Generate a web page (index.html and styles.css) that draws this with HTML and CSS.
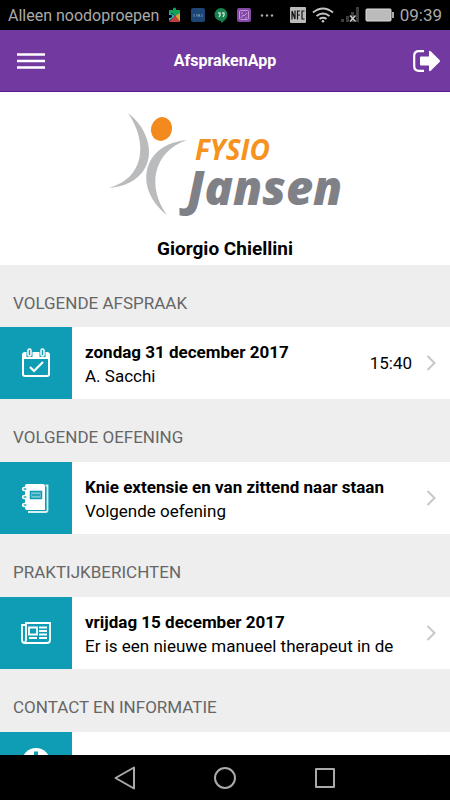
FILE: index.html
```html
<!DOCTYPE html>
<html lang="nl">
<head>
<meta charset="utf-8">
<meta name="viewport" content="width=device-width, initial-scale=1">
<title>AfsprakenApp</title>
<link rel="stylesheet" href="styles.css">
</head>
<body>
<div class="status">
  <span class="carrier">Alleen noodoproepen</span>
  <div class="notices">
    <svg width="14" height="16" viewBox="0 0 14 16"><path d="M1 3h4V2a1 1 0 0 1 3 0v1h4v4l-5 2-3-3H1z" fill="#12a35a"/><path d="M1 5l6 4-6 5v-3q3 0 3-2T1 8z" fill="#2bb5cf"/><path d="M12 6v9L7 9z" fill="#d9a52c"/><path d="M7 8.500l5 6.500H1z" fill="#c23d43"/></svg>
    <svg width="14" height="14" viewBox="0 0 14 14"><rect width="14" height="14" rx="2" fill="#1d4677"/><path d="M3 6v3M5 8h1V6M7 9l1-3 1 3M11 6v3" fill="none" stroke="#7897b8" stroke-width=".8"/></svg>
    <svg width="14" height="15" viewBox="0 0 14 15"><path d="M7 0a6.500 6.500 0 0 1 6.500 6.500C13.500 10 11 13 7 15v-2A6.500 6.500 0 0 1 7 0z" fill="#16834f"/><path d="M4 5h2v2L5 9M8 5h2v2L9 9" fill="none" stroke="#c6d8ce" stroke-width="1.500"/></svg>
    <svg width="14" height="14" viewBox="0 0 14 14"><rect width="14" height="14" rx="2" fill="#8547a8"/><rect x="2.500" y="2.500" width="9" height="9" rx="1" fill="none" stroke="#c09bd2"/><path d="M4 10l2-3 1 1 3-3M4 5h2M8 10h2" fill="none" stroke="#c09bd2"/></svg>
    <svg width="14" height="14" viewBox="0 0 14 14" fill="#aaa"><circle cx="2" cy="7.500" r="1.200"/><circle cx="7" cy="7.500" r="1.200"/><circle cx="12" cy="7.500" r="1.200"/></svg>
  </div>
  <div class="signals">
    <svg width="16" height="16" viewBox="0 0 16 16"><rect width="16" height="16" rx="1" fill="#bbb"/><path d="M2 12.500V4l3 8V3.500M7.500 12.500V4H10M7.500 8H10M14.500 4H12v8h2.500" fill="none" stroke="#111" stroke-width="1.200"/></svg>
    <svg width="22" height="16" viewBox="0 0 22 16" fill="none" stroke="#c4c4c4" stroke-width="2"><path d="M1 5.500q10-8 20 0M4.500 9q6.500-5 13 0M7.500 12q3.500-2.500 7 0"/><circle cx="11" cy="14.300" r="1.300" fill="#c4c4c4" stroke="none"/></svg>
    <svg width="19" height="16" viewBox="0 0 19 16"><path d="M1 12h3v3H1zM6 9h3v6H6zM11 5h3v10h-3zM16 0h3v15h-3z" fill="#3d3d3d"/><path d="M10 8.500l5.500 6M15.500 8.500l-5.500 6" stroke="#ccc" stroke-width="1.500"/></svg>
    <svg width="29" height="14" viewBox="0 0 29 14"><rect x="1" y="1" width="25" height="12" rx="1" fill="#bbb" stroke="#ddd"/><path d="M27 4h2v6h-2z" fill="#aaa"/></svg>
    <span class="clock">09:39</span>
  </div>
</div>
<header class="bar">
  <button class="menu" aria-label="Menu"><svg width="28" height="18" viewBox="0 0 28 18"><path d="M0 2.500h28M0 9h28M0 15.500h28" stroke="#fff" stroke-width="2.600"/></svg></button>
  <h1>AfsprakenApp</h1>
  <button class="logout" aria-label="Uitloggen"><svg width="27" height="22" viewBox="0 0 27 22"><path d="M11 1.200H6Q1.200 1.200 1.200 6v10q0 4.800 4.800 4.800h5" fill="none" stroke="#fff" stroke-width="2.200"/><path d="M8 6.500h8V2q0-2 2-.5l8.500 8.500q1 1 0 2L18 20.500q-2 1.500-2-.5v-4.500H8q-1 0-1-1v-7q0-1 1-1z" fill="#fff"/></svg></button>
</header>
<main>
  <div class="profile">
    <svg class="logo" width="240" height="112" viewBox="0 0 240 112" role="img" aria-label="Fysio Jansen">
      <path d="M23 5C55 30 52 76 4 80C40 70 43 34 23 5z" fill="#b9bbbd"/>
      <path d="M82 32C37 36 28 80 62 107C42 80 47 44 82 32z" fill="#b9bbbd"/>
      <ellipse cx="56.500" cy="21" rx="10.500" ry="12" transform="rotate(15 56.500 21)" fill="#f28a1d"/>
      <text class="logo-top" x="90" y="52">FYSIO</text>
      <text class="logo-name" x="82" y="97">Jansen</text>
    </svg>
    <p class="name">Giorgio Chiellini</p>
  </div>
  <section>
    <h2>VOLGENDE AFSPRAAK</h2>
    <a class="item" href="#afspraak">
      <span class="tile"><svg width="28" height="30" viewBox="0 0 28 30"><path d="M3 4h22q3 0 3 3v19q0 3-3 3H3q-3 0-3-3V7q0-3 3-3z" fill="#fff"/><path d="M2 11h24v15q0 1-1 1H3q-1 0-1-1z" fill="#0e9db4"/><path d="M4.500 3h6v6h-6zM17.500 3h6v6h-6z" fill="#0e9db4"/><rect x="6" y="1" width="3" height="7" rx="1.500" fill="none" stroke="#fff" stroke-width="1.500"/><rect x="19" y="1" width="3" height="7" rx="1.500" fill="none" stroke="#fff" stroke-width="1.500"/><path d="M8 19l4 4 9-9" fill="none" stroke="#fff" stroke-width="2.200"/></svg></span>
      <span class="text"><strong>zondag 31 december 2017</strong><span>A. Sacchi</span></span>
      <span class="time">15:40</span>
      <svg class="chevron" width="10" height="16" viewBox="0 0 10 16"><path d="M1.500 1l7 7-7 7"/></svg>
    </a>
  </section>
  <section>
    <h2>VOLGENDE OEFENING</h2>
    <a class="item" href="#oefening">
      <span class="tile"><svg width="28" height="30" viewBox="0 0 28 30"><path d="M5 1h16q2 0 2 2v24H5q-2 0-2-2V3q0-2 2-2z" fill="#fff"/><path d="M23.500 2.500h2V27q0 2-2 2H6" fill="none" stroke="#d8f0f3" stroke-width="1.800"/><rect x="8.500" y="8.500" width="11" height="7" fill="#76c5d0" stroke="#0e9db4" stroke-width="1.500"/><path d="M10 12h8" stroke="#0e9db4" stroke-width="1.500"/><g fill="#0e9db4" stroke="#fff" stroke-width="1.500"><ellipse cx="3" cy="6" rx="2.500" ry="1.500"/><ellipse cx="3" cy="14" rx="2.500" ry="1.500"/><ellipse cx="3" cy="22" rx="2.500" ry="1.500"/></g></svg></span>
      <span class="text"><strong>Knie extensie en van zittend naar staan</strong><span>Volgende oefening</span></span>
      <svg class="chevron" width="10" height="16" viewBox="0 0 10 16"><path d="M1.500 1l7 7-7 7"/></svg>
    </a>
  </section>
  <section>
    <h2>PRAKTIJKBERICHTEN</h2>
    <a class="item" href="#berichten">
      <span class="tile"><svg width="30" height="22" viewBox="0 0 30 22" fill="none" stroke="#fff" stroke-width="1.800"><path d="M5 3H1v15q0 3 3 3h22q3 0 3-3V1H5v17q0 2-2 3"/><path d="M8 5.500h8v7H8zM18 5.500h8M18 9h8M18 12.500h8M8 16h8M18 16h8"/></svg></span>
      <span class="text"><strong>vrijdag 15 december 2017</strong><span>Er is een nieuwe manueel therapeut in de</span></span>
      <svg class="chevron" width="10" height="16" viewBox="0 0 10 16"><path d="M1.500 1l7 7-7 7"/></svg>
    </a>
  </section>
  <section>
    <h2>CONTACT EN INFORMATIE</h2>
    <a class="item single" href="#contact" aria-label="Contact">
      <span class="tile"><svg width="28" height="28" viewBox="0 0 28 28"><circle cx="14" cy="14" r="14" fill="#fff"/><path d="M12 3.500h4v4h-4zM10 11h6v11h2v2h-8v-2h2v-9h-2z" fill="#0e9db4"/></svg></span>
      <span class="text"></span>
      <svg class="chevron" width="10" height="16" viewBox="0 0 10 16"><path d="M1.500 1l7 7-7 7"/></svg>
    </a>
  </section>
</main>
<nav class="system">
  <button aria-label="Terug"><svg width="24" height="24" viewBox="0 0 24 24"><path d="M21 1.500v21L2.500 12z"/></svg></button>
  <button aria-label="Start"><svg width="24" height="24" viewBox="0 0 24 24"><circle cx="12" cy="12" r="10"/></svg></button>
  <button aria-label="Recent"><svg width="24" height="24" viewBox="0 0 24 24"><rect x="3" y="3" width="18" height="18"/></svg></button>
</nav>
</body>
</html>
```
FILE: styles.css
```css
* { box-sizing: border-box; }
body {
  margin: 0;
  height: 100vh;
  display: flex;
  flex-direction: column;
  overflow: hidden;
  background: #eee;
  color: #000;
  font-family: Roboto, sans-serif;
  font-size: 17px;
}
h1, h2, p { margin: 0; }
svg { display: block; flex: none; }
button { border: 0; padding: 0; background: none; }

.status {
  flex: none;
  height: 30px;
  padding: 0 8px;
  display: flex;
  align-items: center;
  background: #000;
  color: #aaa;
}
.carrier { font-size: 16px; }
.notices { display: flex; align-items: center; gap: 9px; margin-left: 9px; }
.signals { display: flex; align-items: center; gap: 6px; margin-left: auto; }

.bar {
  flex: none;
  height: 62px;
  padding: 0 10px;
  display: grid;
  grid-template-columns: 1fr auto 1fr;
  align-items: center;
  background: #7239a0;
  border-bottom: 1px solid #5d1793;
  color: #fff;
}
.bar h1 { font-size: 16px; font-weight: 700; }
.menu { justify-self: start; padding-left: 7px; }
.logout { justify-self: end; }

main { flex: 1; min-height: 0; overflow: hidden; }
.profile {
  padding: 16px 0 2px;
  display: flex;
  flex-direction: column;
  align-items: center;
  background: #fff;
}
.logo-top {
  font: italic 700 28px "Open Sans", sans-serif;
  fill: #f6921e;
}
.logo-name {
  font: italic 800 47px "Open Sans", sans-serif;
  fill: #808187;
}
.name {
  margin-top: 15px;
  line-height: 28px;
  font-size: 19px;
  font-weight: 700;
}

h2 {
  height: 62px;
  padding: 14px 13px 0;
  line-height: 48px;
  font-size: 17px;
  font-weight: 400;
  color: #666;
}
section + section h2 { height: 63px; }
.item {
  height: 72px;
  padding-right: 14px;
  display: flex;
  align-items: center;
  background: #fff;
  color: #000;
  text-decoration: none;
}
.single { height: 60px; }
.tile {
  flex: none;
  align-self: stretch;
  width: 72px;
  display: grid;
  place-items: center;
  background: #0e9db4;
}
.text {
  flex: 1;
  min-width: 0;
  padding: 2px 0 0 13px;
  display: flex;
  flex-direction: column;
  line-height: 24px;
  white-space: nowrap;
}
.time { margin-right: 14px; }
.chevron { fill: none; stroke: #c7c7cc; stroke-width: 2; }

.system {
  flex: none;
  height: 45px;
  display: flex;
  justify-content: center;
  align-items: center;
  gap: 76px;
  background: #000;
}
.system svg { fill: none; stroke: #aaa; stroke-width: 2; stroke-linejoin: round; }
```
